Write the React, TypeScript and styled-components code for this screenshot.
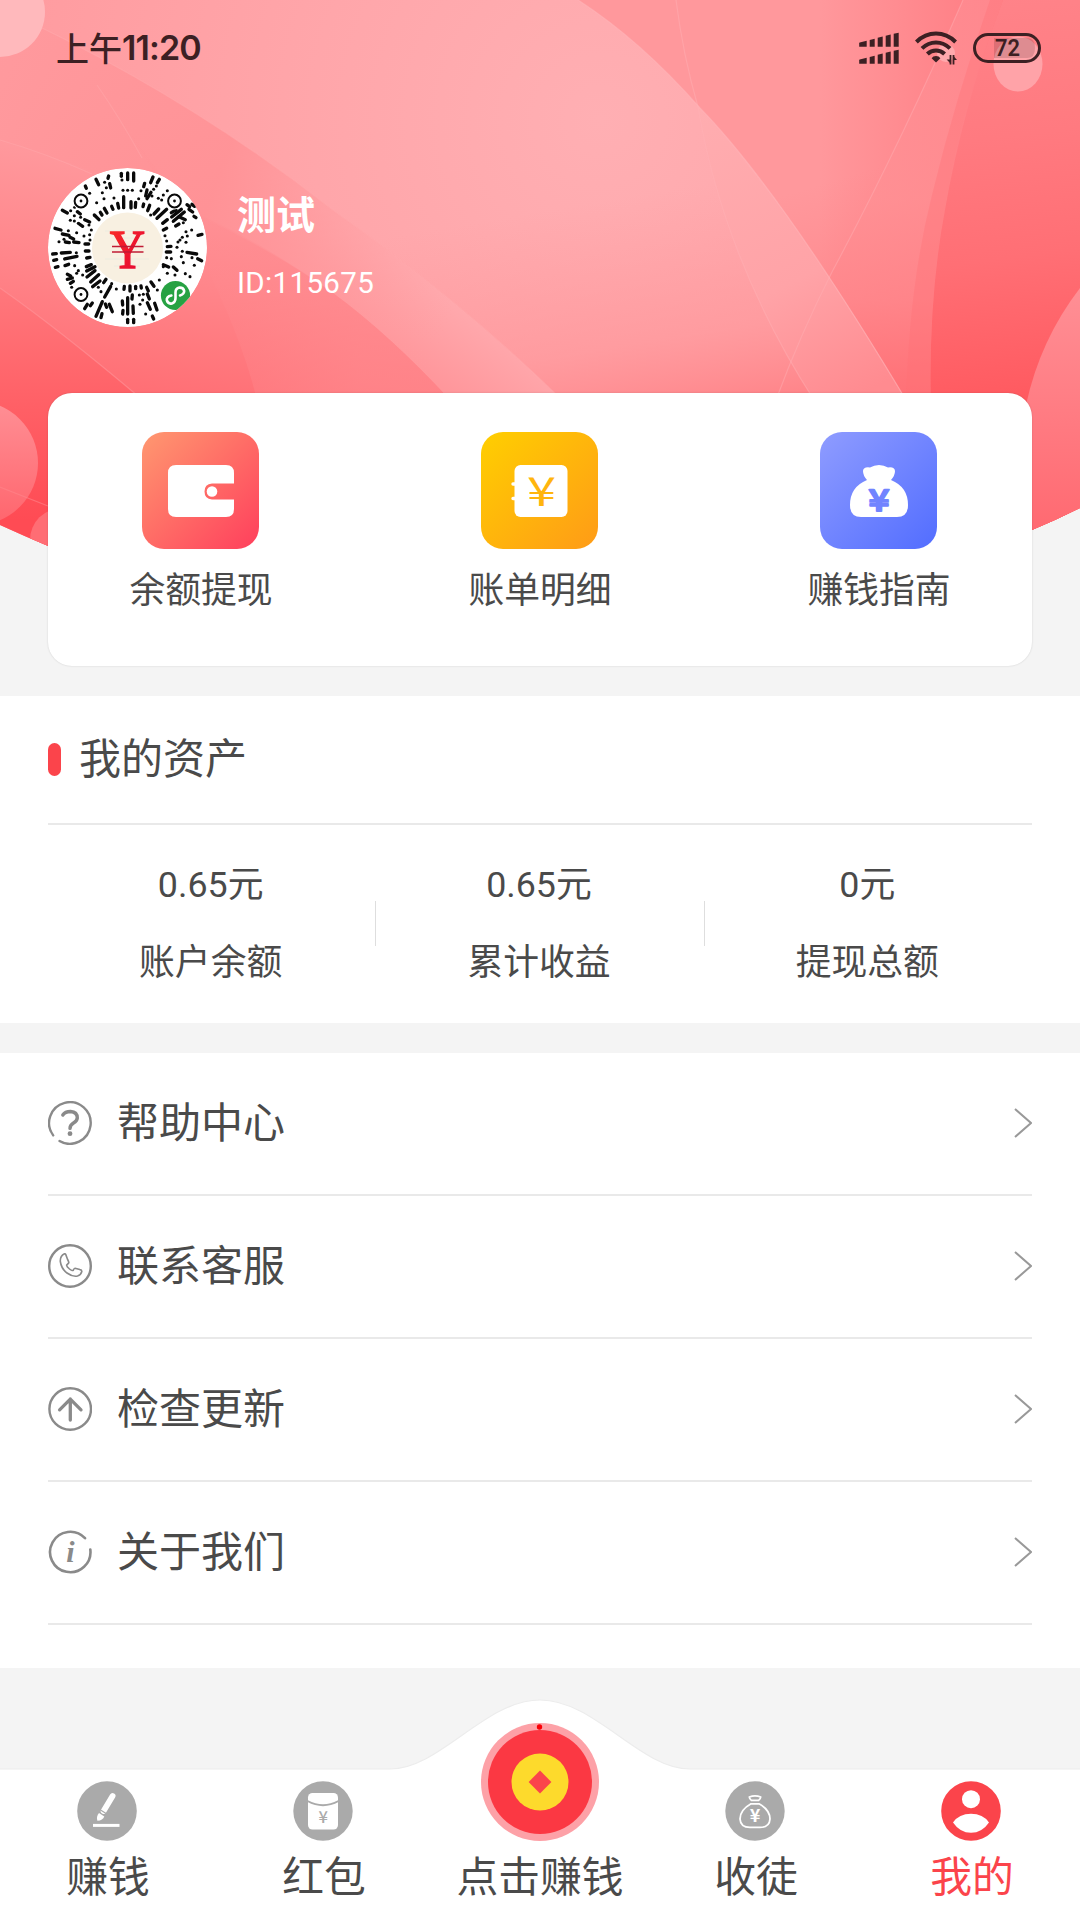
import React from 'react';
import styled, { createGlobalStyle } from 'styled-components';

const GlobalStyle = createGlobalStyle`
  * { box-sizing: border-box; }
  body {
    margin: 0;
    background: #f4f4f4;
    font-family: Roboto, "Noto Sans CJK SC", sans-serif;
    color: #4a4a4a;
  }
  svg { display: block; flex: none; }
`;

const Page = styled.div`
  width: 1080px;
  height: 1920px;
  display: flex;
  flex-direction: column;
  overflow: hidden;
  background: #f4f4f4;
`;

const Header = styled.header`
  position: relative;
  height: 696px;
  flex: none;
`;

const HeaderArt = styled.svg`
  position: absolute;
  inset: 0;
`;

const HeaderContent = styled.div`
  position: relative;
  display: flex;
  flex-direction: column;
`;

const StatusBar = styled.div`
  height: 95px;
  padding: 0 39px 0 56px;
  display: flex;
  align-items: center;
  color: #3c2023;
`;

const Clock = styled.div`
  flex: 1;
  display: flex;
  align-items: center;
  font-family: "Noto Sans CJK SC", sans-serif;
  font-size: 33px;
  line-height: 46px;
  padding-bottom: 2px;
  font-weight: 500;
`;

const ClockDigits = styled.span`
  padding-top: 2px;
  font-family: Inter, sans-serif;
  font-size: 34px;
  font-weight: 600;
  letter-spacing: -0.9px;
`;

const StatusIcons = styled.div`
  display: flex;
  align-items: center;
  gap: 16px;
`;

const Profile = styled.div`
  display: flex;
  align-items: center;
  gap: 30px;
  padding: 73px 48px 0;
`;

const ProfileText = styled.div`
  display: flex;
  flex-direction: column;
  color: #fff;
`;

const UserName = styled.div`
  font-size: 39px;
  line-height: 56px;
  font-weight: 700;
`;

const UserId = styled.div`
  margin-top: 17px;
  margin-bottom: 3px;
  font-size: 29.5px;
  line-height: 44px;
  letter-spacing: 0.35px;
`;

const Card = styled.section`
  margin: 66px 48px 0;
  height: 273px;
  padding: 39px 82px 0 80px;
  display: flex;
  justify-content: space-between;
  background: #fff;
  border-radius: 24px;
  box-shadow: 0 0 2px rgba(0, 0, 0, 0.16);
`;

const Action = styled.div`
  width: 144px;
  display: flex;
  flex-direction: column;
  align-items: center;
`;

const Tile = styled.div<{ $from: string; $to: string }>`
  width: 117px;
  height: 117px;
  border-radius: 22px;
  background: linear-gradient(135deg, ${p => p.$from}, ${p => p.$to});
`;

const ActionLabel = styled.div`
  margin-top: 16px;
  padding-left: 2px;
  font-size: 35.8px;
  line-height: 52px;
  white-space: nowrap;
`;

const Assets = styled.section`
  height: 327px;
  flex: none;
  padding: 0 48px;
  background: #fff;
`;

const AssetsHead = styled.div`
  height: 129px;
  display: flex;
  align-items: center;
  gap: 18px;
  border-bottom: 2px solid #e9e9e9;
`;

const Marker = styled.span`
  width: 13px;
  height: 33px;
  border-radius: 6.5px;
  background: #fb444b;
`;

const Title = styled.h2`
  margin: 0;
  font-size: 42px;
  line-height: 60px;
  font-weight: 400;
`;

const Stats = styled.div`
  height: 197px;
  display: flex;
  align-items: center;
`;

const Stat = styled.div`
  flex: 1;
  padding-right: 2px;
  display: flex;
  flex-direction: column;
  align-items: center;
  gap: 26px;
  font-size: 35.8px;
  line-height: 52px;
`;

const StatDivider = styled.span`
  width: 1px;
  height: 45px;
  background: #dedede;
`;

const Menu = styled.section`
  margin-top: 30px;
  height: 615px;
  flex: none;
  padding: 0 48px;
  background: #fff;
`;

const MenuRow = styled.div`
  height: 143px;
  padding-bottom: 1px;
  display: flex;
  align-items: center;
  border-bottom: 2px solid #e9e9e9;
`;

const MenuLabel = styled.div`
  flex: 1;
  margin-left: 25px;
  padding-top: 1px;
  font-size: 42px;
  line-height: 60px;
`;

const TabBar = styled.nav`
  position: relative;
  margin-top: auto;
  height: 222px;
  flex: none;
`;

const TabShape = styled.svg`
  position: absolute;
  inset: 0;
`;

const Tabs = styled.div`
  position: relative;
  height: 100%;
  display: flex;
  align-items: flex-end;
`;

const Tab = styled.div<{ $active?: boolean }>`
  flex: 1;
  padding-bottom: 12px;
  display: flex;
  flex-direction: column;
  align-items: center;
  gap: 7px;
  font-size: 41.8px;
  line-height: 60px;
  white-space: nowrap;
  color: ${p => (p.$active ? '#fb444b' : '#4a4a4a')};
`;

const YEN_FONT = '"Noto Sans CJK SC", sans-serif';

function HeaderBackground() {
  return (
    <HeaderArt width="1080" height="696" viewBox="0 0 1080 696">
      <defs>
        <clipPath id="arc"><path d="M0 0H1080V508Q1056 520 1032 530Q800 640 540 640Q280 640 48 546Q24 536 0 525Z" /></clipPath>
        <linearGradient id="base" x1="0" y1="0" x2="0" y2="393" gradientUnits="userSpaceOnUse">
          <stop offset="0" stopColor="#ff979b" /><stop offset="0.6" stopColor="#ff8d92" /><stop offset="1" stopColor="#ff7d82" />
        </linearGradient>
        <radialGradient id="glow" cx="600" cy="120" r="640" gradientUnits="userSpaceOnUse">
          <stop offset="0" stopColor="#ffafb3" /><stop offset="0.45" stopColor="#ffa6aa" /><stop offset="1" stopColor="#ff9a9e" />
        </radialGradient>
        <linearGradient id="glowFade" x1="610" y1="200" x2="650" y2="440" gradientUnits="userSpaceOnUse">
          <stop offset="0" stopColor="#ff9a9e" stopOpacity="0" /><stop offset="0.6" stopColor="#ff9599" stopOpacity="0.65" /><stop offset="1" stopColor="#ff7d82" />
        </linearGradient>
        <linearGradient id="band" x1="460" y1="300" x2="380" y2="420" gradientUnits="userSpaceOnUse">
          <stop offset="0" stopColor="#ffaaae" /><stop offset="1" stopColor="#ff888d" />
        </linearGradient>
        <linearGradient id="bandLeft" x1="0" y1="0" x2="500" y2="180" gradientUnits="userSpaceOnUse">
          <stop offset="0" stopColor="#ff9a9e" /><stop offset="0.5" stopColor="#ff9195" stopOpacity="0.9" /><stop offset="1" stopColor="#ff9da1" stopOpacity="0" />
        </linearGradient>
        <linearGradient id="lowLeft" x1="100" y1="130" x2="60" y2="400" gradientUnits="userSpaceOnUse">
          <stop offset="0" stopColor="#ff9da1" /><stop offset="0.5" stopColor="#ff868b" /><stop offset="1" stopColor="#ff6b71" />
        </linearGradient>
        <linearGradient id="lowMid" x1="120" y1="0" x2="360" y2="0" gradientUnits="userSpaceOnUse">
          <stop offset="0" stopColor="#ff8a8f" stopOpacity="0" /><stop offset="1" stopColor="#ff8b90" />
        </linearGradient>
        <linearGradient id="corner" x1="0" y1="290" x2="0" y2="520" gradientUnits="userSpaceOnUse">
          <stop offset="0" stopColor="#ff777c" /><stop offset="0.5" stopColor="#ff6066" /><stop offset="1" stopColor="#ff4b54" />
        </linearGradient>
        <linearGradient id="right" x1="680" y1="0" x2="1080" y2="0" gradientUnits="userSpaceOnUse">
          <stop offset="0" stopColor="#ff989c" /><stop offset="0.35" stopColor="#ff989c" /><stop offset="0.75" stopColor="#ff7f85" /><stop offset="1" stopColor="#ff7279" />
        </linearGradient>
        <linearGradient id="rightFade" x1="700" y1="220" x2="760" y2="420" gradientUnits="userSpaceOnUse">
          <stop offset="0" stopColor="#ff7d82" stopOpacity="0" /><stop offset="1" stopColor="#ff7278" stopOpacity="0.8" />
        </linearGradient>
        <linearGradient id="edge" x1="960" y1="0" x2="1010" y2="400" gradientUnits="userSpaceOnUse">
          <stop offset="0" stopColor="#ff8389" /><stop offset="0.35" stopColor="#ff7a80" /><stop offset="0.65" stopColor="#ff6f75" /><stop offset="1" stopColor="#ff5a60" />
        </linearGradient>
        <linearGradient id="lens" x1="700" y1="110" x2="850" y2="400" gradientUnits="userSpaceOnUse">
          <stop offset="0" stopColor="#ffadb0" /><stop offset="0.6" stopColor="#ffa3a7" /><stop offset="1" stopColor="#ff8b90" />
        </linearGradient>
        <linearGradient id="ray" x1="0" y1="0" x2="0" y2="400" gradientUnits="userSpaceOnUse">
          <stop offset="0" stopColor="#ff8c92" /><stop offset="0.5" stopColor="#ff9094" /><stop offset="0.75" stopColor="#ff868b" /><stop offset="1" stopColor="#ff6d73" />
        </linearGradient>
        <linearGradient id="bubble" x1="0" y1="0" x2="0" y2="1">
          <stop offset="0" stopColor="#ff8f95" /><stop offset="1" stopColor="#ff656d" />
        </linearGradient>
      </defs>
      <g clipPath="url(#arc)">
        <rect width="1080" height="696" fill="url(#base)" />
        <path d="M560 0H1080V560H560Z" fill="url(#right)" />
        <path d="M560 0H1080V560H560Z" fill="url(#rightFade)" />
        <path d="M963 0Q900 145 832 272Q800 335 772 410H931Q928 300 945 210Q960 110 1003 0Z" fill="url(#ray)" opacity="0.75" />
        <path d="M1003 0Q962 110 945 210Q928 300 931 410V560H1080V0Z" fill="url(#edge)" />
        <path d="M990 0Q955 100 932 195Q908 290 906 410H931Q928 300 945 210Q960 110 1003 0Z" fill="#ff6f75" opacity="0.35" />
        <path d="M0 8Q180 90 333 210Q460 300 562 400H906Q780 190 700 108Q640 40 578 0H0Z" fill="url(#glow)" />
        <path d="M0 8Q180 90 333 210Q460 300 562 400H906Q780 190 700 108Q640 40 578 0H0Z" fill="url(#glowFade)" />
        <path d="M698 107Q724 260 814 400H906Q800 220 698 107Z" fill="url(#lens)" />
        <path d="M676 0Q683 55 698 107Q724 260 814 400" fill="none" stroke="#ffb2b5" strokeWidth="1.2" opacity="0.45" />
        <path d="M578 0Q640 40 700 108Q780 190 906 400" fill="none" stroke="#ffb8bb" strokeWidth="1.3" opacity="0.5" />
        <path d="M963 0Q900 145 832 272Q800 335 776 400" fill="none" stroke="#ffb0b3" strokeWidth="1.2" opacity="0.45" />
        <path d="M0 8Q180 90 333 210Q460 300 562 400H0Z" fill="url(#band)" />
        <path d="M0 8Q180 90 333 210Q460 300 562 400H0Z" fill="url(#bandLeft)" />
        <path d="M0 140Q210 205 333 293Q390 335 450 400H0Z" fill="url(#lowLeft)" />
        <path d="M97 85Q225 270 257 400H450Q390 335 333 293Q260 240 184 208Z" fill="url(#lowMid)" opacity="0.6" />
        <path d="M0 8Q180 90 333 210Q460 300 562 400M97 85Q120 118 142 158M0 140Q45 153 92 174" fill="none" stroke="#ffb0b3" strokeWidth="1.2" opacity="0.35" />
        <path d="M0 288Q60 330 145 402V560H0Z" fill="url(#corner)" />
        <path d="M0 288Q60 330 145 402" fill="none" stroke="#ff959a" strokeWidth="1.3" opacity="0.6" />
        <circle cx="-24" cy="463" r="62" fill="url(#bubble)" />
        <path d="M0 487L48 506" stroke="#ff858b" strokeWidth="1.2" opacity="0.6" />
        <circle cx="62" cy="540" r="32" fill="#ff6d74" />
        <path d="M1080 288Q1040 340 1026 405V560H1080Z" fill="url(#bubble)" />
        <circle cx="0" cy="12" r="45" fill="#ffb9bc" />
        <ellipse cx="1018" cy="64" rx="24.5" ry="27.5" fill="#ffa3a8" />
        <circle cx="946" cy="53" r="9" fill="#ffa9ad" />
      </g>
    </HeaderArt>
  );
}

function SignalIcon() {
  return (
    <svg width="41" height="32" viewBox="0 0 41 32" fill="#3c2023">
      {[0, 17].map(y => (
        <g key={y} transform={`translate(0.7 ${y + 0.8})`}>
          <path d="M0.5 11Q0 10 1 9.8L8 8V14H0.5Z" />
          <path d="M11 7.2L16 6V14H11Z" />
          <path d="M19 5L24 3.6V14H19Z" />
          <path d="M27 3L32 1.6V14H27Z" />
          <path d="M35 1L40 0V14H35Z" />
        </g>
      ))}
    </svg>
  );
}

function WifiIcon() {
  return (
    <svg width="42" height="34" viewBox="0 0 42 34" fill="none" stroke="#3c2023" strokeWidth="4">
      <path d="M1.4 11Q10 2.6 21 2.6T40.6 11" />
      <path d="M7 17.4Q13 11.4 21 11.4T35 17.4" />
      <path d="M12.4 23Q16 19.4 21 19.4T29.6 23" />
      <path d="M21 25Q24 25 25.4 27.2L21 31.4L16.6 27.2Q18 25 21 25Z" fill="#3c2023" stroke="none" />
      <path d="M35.5 24V33.5M38.5 33.5V24" strokeWidth="1.8" />
      <path d="M35.5 32.5L31.6 28.4H35.5ZM38.5 25L42 29H38.5Z" fill="#3c2023" stroke="none" />
    </svg>
  );
}

function BatteryIcon() {
  return (
    <svg width="68" height="30" viewBox="0 0 68 30">
      <path d="M21 5H54Q62 5 62 15T54 25H21Z" fill="#3c2023" opacity="0.17" />
      <rect x="1.5" y="1.5" width="65" height="27" rx="13.5" fill="none" stroke="#3c2023" strokeWidth="3" />
      <text x="34.5" y="23.4" textAnchor="middle" fontFamily="Roboto, sans-serif" fontWeight="600" fontSize="24" textLength="25" lengthAdjust="spacingAndGlyphs" fill="#3c2023">72</text>
    </svg>
  );
}

/* Code marks on a 477-unit disc: dashes are x1,y1,x2,y2 and dots are x,y. */
const DASHES = [
  [220, 16, 220, 25], [239, 15, 239, 35], [257, 15, 257, 39], [227, 86, 227, 119], [209, 106, 212, 120], [191, 115, 195, 124],
  [249, 101, 249, 120], [263, 103, 262, 118], [287, 108, 285, 116], [305, 112, 299, 128], [182, 24, 180, 31], [144, 34, 152, 50],
  [185, 47, 188, 60], [112, 54, 115, 61], [169, 121, 177, 135], [157, 133, 162, 141], [43, 127, 58, 135], [88, 131, 97, 138],
  [110, 155, 125, 162], [139, 141, 153, 155], [94, 168, 104, 175], [21, 181, 39, 186], [43, 198, 63, 202], [66, 208, 77, 213],
  [52, 222, 64, 224], [77, 222, 93, 224], [111, 228, 122, 228], [14, 258, 25, 257], [40, 255, 67, 253], [17, 277, 26, 275],
  [22, 298, 30, 296], [50, 273, 87, 265], [112, 249, 123, 249], [116, 270, 126, 268], [51, 293, 62, 289], [115, 296, 130, 290],
  [116, 309, 141, 296], [117, 327, 141, 308], [128, 342, 152, 320], [58, 319, 68, 324], [58, 334, 73, 330], [67, 346, 76, 340],
  [134, 356, 156, 339], [174, 334, 167, 344], [188, 355, 170, 387], [163, 401, 144, 445], [184, 409, 193, 431], [172, 408, 176, 418],
  [162, 437, 159, 449], [133, 405, 127, 413], [118, 409, 110, 422], [229, 355, 228, 364], [246, 354, 246, 369], [263, 355, 263, 362],
  [279, 354, 280, 360], [296, 358, 301, 369], [309, 342, 318, 355], [253, 381, 252, 393], [239, 389, 239, 438], [223, 399, 224, 411],
  [225, 427, 224, 438], [255, 414, 256, 436], [239, 454, 239, 464], [257, 454, 257, 464], [298, 378, 304, 393], [298, 404, 307, 424],
  [320, 406, 327, 426], [313, 444, 317, 453], [346, 290, 362, 297], [376, 297, 387, 307], [449, 272, 461, 278], [417, 253, 446, 258],
  [355, 252, 368, 252], [358, 236, 369, 235], [450, 202, 462, 199], [346, 186, 356, 181], [327, 151, 356, 124], [344, 166, 358, 155],
  [318, 138, 332, 123], [371, 147, 400, 124], [376, 160, 409, 132], [393, 146, 412, 155], [370, 134, 384, 126], [383, 174, 393, 168],
  [417, 110, 425, 116], [432, 109, 440, 115], [423, 124, 434, 132], [438, 145, 444, 149], [315, 27, 308, 44], [334, 34, 328, 44],
  [290, 46, 287, 56], [297, 66, 293, 84], [309, 73, 297, 92],
];

const DOTS = [
  [222, 36], [225, 67], [239, 67], [253, 67], [272, 92], [198, 90], [170, 43], [175, 59], [163, 74], [125, 76], [168, 92], [146, 104],
  [80, 118], [68, 128], [79, 143], [67, 157], [98, 148], [79, 159], [91, 166], [123, 171], [130, 186], [125, 200], [61, 188],
  [86, 194], [48, 214], [33, 221], [108, 204], [126, 216], [85, 254], [80, 293], [91, 308], [104, 321], [86, 316], [71, 358],
  [151, 358], [159, 371], [191, 347], [205, 363], [274, 381], [286, 379], [284, 396], [293, 438], [276, 409], [334, 336], [328, 366],
  [346, 296], [358, 316], [381, 321], [412, 317], [426, 326], [439, 292], [406, 284], [403, 250], [387, 238], [400, 266], [370, 272],
  [356, 269], [356, 219], [351, 203], [390, 222], [414, 191], [431, 186], [403, 208], [418, 204], [396, 216], [414, 223], [308, 141],
  [406, 164], [358, 68], [346, 81], [325, 54], [317, 64], [312, 84], [331, 91], [341, 96], [279, 68], [432, 269],
];

function Avatar() {
  return (
    <svg width="159" height="159" viewBox="0 0 159 159">
      <defs>
        <clipPath id="avatarClip"><circle cx="79.5" cy="79.5" r="79.5" /></clipPath>
        <linearGradient id="yenRed" x1="0" y1="0" x2="1" y2="1"><stop offset="0" stopColor="#fb2f25" /><stop offset="1" stopColor="#e20034" /></linearGradient>
      </defs>
      <g clipPath="url(#avatarClip)">
        <circle cx="79.5" cy="79.5" r="79.5" fill="#fff" />
        <g transform="scale(0.3333)" fill="none" stroke="#0a0a0a" strokeWidth="10" strokeLinecap="round">
          {DASHES.map(([x1, y1, x2, y2]) => (
            <path key={`${x1}-${y1}`} d={`M${x1} ${y1}L${x2} ${y2}`} />
          ))}
          {DOTS.map(([x, y]) => (
            <circle key={`${x}-${y}`} cx={x} cy={y} r="4.6" fill="#0a0a0a" stroke="none" />
          ))}
        </g>
        {[[33, 33], [126.5, 33], [33, 126.5]].map(([x, y]) => (
          <g key={`${x}-${y}`}>
            <circle cx={x} cy={y} r="8.4" fill="#fff" />
            <circle cx={x} cy={y} r="6.4" fill="none" stroke="#0a0a0a" strokeWidth="2" />
            <circle cx={x} cy={y} r="1.4" fill="#0a0a0a" />
          </g>
        ))}
        <circle cx="79.5" cy="80" r="35.5" fill="#f8f0e1" />
        <path d="M57 63H101M57 91H101M66 98H92M66 70H92" stroke="#e8ebdf" strokeWidth="0.8" />
        <text x="79.5" y="100.3" textAnchor="middle" fontFamily="Liberation Serif, serif" fontWeight="400" fontSize="55" textLength="35" lengthAdjust="spacingAndGlyphs" fill="url(#yenRed)" stroke="url(#yenRed)" strokeWidth="1.6">Y</text>
        <path d="M64 78.5H95.5M64 84H95.5" stroke="#c01b35" strokeWidth="1.3" />
        <circle cx="127.5" cy="127.5" r="16" fill="#fff" />
        <circle cx="127.5" cy="127.5" r="14.6" fill="#27a243" />
        <path d="M123.4 127.5Q118.4 128.5 118.8 132.2Q120 136.4 124 135.4Q127.5 134.4 127.5 130V124.5Q127.5 120.4 131.4 119.6Q135.4 119.4 136.2 123Q136 126.4 132 127.4" fill="none" stroke="#fff" strokeWidth="2.6" strokeLinecap="round" />
      </g>
    </svg>
  );
}

function WalletIcon() {
  return (
    <svg width="117" height="117" viewBox="0 0 117 117">
      <path d="M34 33H84Q92 33 92 41V51.5H70Q62.5 52 62.5 59.5T70 67.5H92V77Q92 85 84 85H34Q26 85 26 77V41Q26 33 34 33Z" fill="#fff" />
      <circle cx="70" cy="59.5" r="5.3" fill="#fff" />
    </svg>
  );
}

function BillIcon() {
  return (
    <svg width="117" height="117" viewBox="0 0 117 117">
      <rect x="33.5" y="33" width="53" height="52" rx="6" fill="#fff" />
      <path d="M32 52H35M32 66.5H35" stroke="#fff" strokeWidth="3.4" strokeLinecap="round" />
      <text x="60.5" y="73.5" textAnchor="middle" fontFamily={YEN_FONT} fontSize="40" textLength="29" lengthAdjust="spacingAndGlyphs" fill="#ffb50d">¥</text>
    </svg>
  );
}

function MoneyBagIcon() {
  return (
    <svg width="117" height="117" viewBox="0 0 117 117">
      <path d="M47 48Q43 43.5 43 39Q43.5 34.5 50 35.5Q54 33 59 33T68 35.5Q74.5 34.5 75 39Q75 43.5 71 48Q88 55 88 73Q88 85 77 85H41Q30 85 30 73Q30 55 47 48Z" fill="#fff" />
      <text x="59" y="78.5" textAnchor="middle" fontFamily={YEN_FONT} fontWeight="500" fontSize="30" textLength="21" lengthAdjust="spacingAndGlyphs" fill="#7184ff" stroke="#7184ff" strokeWidth="1.8" strokeLinejoin="round">¥</text>
    </svg>
  );
}

function Chevron() {
  return (
    <svg width="18" height="30" viewBox="0 0 18 30" fill="none" stroke="#999" strokeWidth="2">
      <path d="M1 1L17 15L1 29" />
    </svg>
  );
}

function MenuIcon({ children }: { children: React.ReactNode }) {
  return (
    <svg width="44" height="44" viewBox="0 0 44 44" fill="none" stroke="#8a8a8a" strokeWidth="2.4" strokeLinecap="round" strokeLinejoin="round">
      {children}
    </svg>
  );
}

const menuItems = [
  {
    label: '帮助中心',
    icon: (
      <MenuIcon>
        <path d="M5.2 34.4A20.8 20.8 0 1 1 11.5 40" />
        <path d="M14.8 14Q17 10.5 22.6 10.5Q29.3 11 29.3 17Q29 20 25.5 22Q22 24.2 22 27.4" strokeWidth="3.4" />
        <circle cx="22" cy="32.7" r="2.4" fill="#8a8a8a" stroke="none" />
      </MenuIcon>
    ),
  },
  {
    label: '联系客服',
    icon: (
      <MenuIcon>
        <circle cx="22" cy="22" r="20.8" />
        <path d="M16.5 9.8Q12 12 12.3 17.5Q13.5 25 19 29Q24.5 33 29.5 32Q33 31 33.8 27.5Q34 26 31.8 25.6L27 24.3Q26 24.4 25.3 26.2Q24 27 21.5 25Q18.5 22.5 18.6 21.2Q20 20 20.8 18.8Q21 18 19.6 15.5L17.8 10.6Q17.4 9.5 16.5 9.8Z" strokeWidth="1.6" />
      </MenuIcon>
    ),
  },
  {
    label: '检查更新',
    icon: (
      <MenuIcon>
        <circle cx="22.2" cy="22" r="20.8" />
        <path d="M22.3 12V33M11.6 22.8L22.3 12.2L33 22.8" strokeWidth="3.3" />
      </MenuIcon>
    ),
  },
  {
    label: '关于我们',
    icon: (
      <MenuIcon>
        <path d="M37 8.2A20.2 20.2 0 1 0 42.3 19.5" strokeWidth="2.6" />
        <text x="22.5" y="32.2" textAnchor="middle" fontFamily="Liberation Serif, serif" fontStyle="italic" fontWeight="700" fontSize="30" fill="#8a8a8a" stroke="none">i</text>
      </MenuIcon>
    ),
  },
];

function EarnIcon() {
  return (
    <svg width="62" height="60" viewBox="0 0 62 60">
      <circle cx="30" cy="30" r="29.8" fill="#aaa" />
      <path d="M35.6 15L26.6 30" stroke="#fff" strokeWidth="5.8" strokeLinecap="round" />
      <path d="M23.5 29L29.5 32.8" stroke="#aaa" strokeWidth="1.2" />
      <path d="M22 32L27.3 35.4Q25.8 39.3 20.4 39.8Q19 35.5 22 32Z" fill="#fff" />
      <path d="M16 44.4H42.5" stroke="#fff" strokeWidth="3" />
    </svg>
  );
}

function PacketIcon() {
  return (
    <svg width="62" height="60" viewBox="0 0 62 60">
      <circle cx="30" cy="30" r="29.7" fill="#aaa" />
      <rect x="15" y="12" width="30" height="36.5" rx="4.5" fill="#fff" />
      <path d="M14.5 20Q30 28.5 45.5 20" fill="none" stroke="#aaa" strokeWidth="1.8" />
      <text x="30.3" y="41.8" textAnchor="middle" fontFamily={YEN_FONT} fontWeight="500" fontSize="16.5" fill="#aaa">¥</text>
    </svg>
  );
}

function ClickEarnIcon() {
  return (
    <svg width="118" height="118" viewBox="0 0 118 118">
      <circle cx="59" cy="59" r="59" fill="#fda1a7" />
      <circle cx="59" cy="59" r="52" fill="#fb3843" />
      <circle cx="59" cy="59" r="28.5" fill="#fdda2c" />
      <path d="M59 47.6L70.4 59L59 70.4L47.6 59Z" fill="#fb444b" />
      <circle cx="58.5" cy="4" r="2.7" fill="#fa0006" />
    </svg>
  );
}

function InviteIcon() {
  return (
    <svg width="62" height="60" viewBox="0 0 62 60" fill="none" stroke="#fff" strokeWidth="1.8" strokeLinejoin="round">
      <circle cx="30" cy="30" r="29.7" fill="#aaa" stroke="none" />
      <path d="M24.3 16Q30 13.6 35.7 16Q35.5 18 33.6 19.4H26.4Q24.5 18 24.3 16Z" />
      <path d="M26 22.8H34Q45 29 45 38Q44.5 46.4 35 46.4H25Q15.5 46.4 15 38Q15 29 26 22.8Z" />
      <text x="30" y="41" textAnchor="middle" fontFamily={YEN_FONT} fontWeight="700" fontSize="18" fill="#fff" stroke="none">¥</text>
    </svg>
  );
}

function MineIcon() {
  return (
    <svg width="62" height="60" viewBox="0 0 62 60">
      <circle cx="30" cy="30" r="29.8" fill="#fb444b" />
      <circle cx="30" cy="18.2" r="9" fill="#fff" />
      <path d="M12 41.5Q18 32.8 30 32.8T48 41.5Q41 51.8 30 51.8T12 41.5Z" fill="#fff" />
    </svg>
  );
}

const actions = [
  { label: '余额提现', from: '#ff9870', to: '#ff3f5c', icon: <WalletIcon /> },
  { label: '账单明细', from: '#ffcf00', to: '#ff9b17', icon: <BillIcon /> },
  { label: '赚钱指南', from: '#8f9cff', to: '#526dff', icon: <MoneyBagIcon /> },
];

const tabs = [
  { label: '赚钱', icon: <EarnIcon /> },
  { label: '红包', icon: <PacketIcon /> },
  { label: '点击赚钱', icon: <ClickEarnIcon /> },
  { label: '收徒', icon: <InviteIcon /> },
  { label: '我的', icon: <MineIcon />, active: true },
];

export default function App() {
  return (
    <Page>
      <GlobalStyle />
      <Header>
        <HeaderBackground />
        <HeaderContent>
          <StatusBar>
            <Clock>上午<ClockDigits>11:20</ClockDigits></Clock>
            <StatusIcons>
              <SignalIcon />
              <WifiIcon />
              <BatteryIcon />
            </StatusIcons>
          </StatusBar>
          <Profile>
            <Avatar />
            <ProfileText>
              <UserName>测试</UserName>
              <UserId>ID:115675</UserId>
            </ProfileText>
          </Profile>
          <Card>
            {actions.map(a => (
              <Action key={a.label}>
                <Tile $from={a.from} $to={a.to}>{a.icon}</Tile>
                <ActionLabel>{a.label}</ActionLabel>
              </Action>
            ))}
          </Card>
        </HeaderContent>
      </Header>
      <Assets>
        <AssetsHead>
          <Marker />
          <Title>我的资产</Title>
        </AssetsHead>
        <Stats>
          <Stat><span>0.65元</span><span>账户余额</span></Stat>
          <StatDivider />
          <Stat><span>0.65元</span><span>累计收益</span></Stat>
          <StatDivider />
          <Stat><span>0元</span><span>提现总额</span></Stat>
        </Stats>
      </Assets>
      <Menu>
        {menuItems.map(m => (
          <MenuRow key={m.label}>
            {m.icon}
            <MenuLabel>{m.label}</MenuLabel>
            <Chevron />
          </MenuRow>
        ))}
      </Menu>
      <TabBar>
        <TabShape width="1080" height="222" viewBox="0 0 1080 222">
          <path d="M-2 71H390C440 71 485 2 540 2S640 71 690 71H1082V224H-2Z" fill="#fff" stroke="#ececec" strokeWidth="1.2" />
        </TabShape>
        <Tabs>
          {tabs.map(t => (
            <Tab key={t.label} $active={t.active}>
              {t.icon}
              <span>{t.label}</span>
            </Tab>
          ))}
        </Tabs>
      </TabBar>
    </Page>
  );
}
